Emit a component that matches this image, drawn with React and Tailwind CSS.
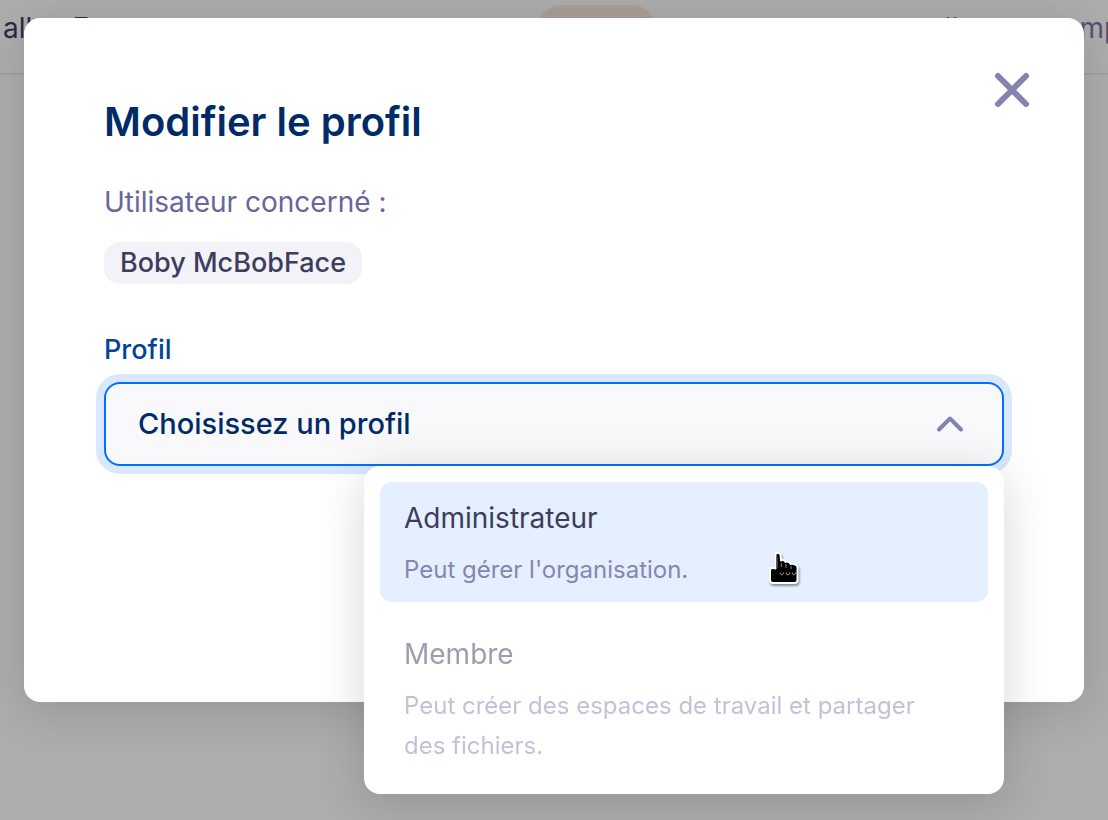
import { useState } from "react";

const PROFILES = [
  { id: "admin", name: "Administrateur", description: "Peut gérer l'organisation.", disabled: false },
  {
    id: "member",
    name: "Membre",
    description: "Peut créer des espaces de travail et partager des fichiers.",
    disabled: true,
  },
];

function HandPointer() {
  return (
    <svg
      aria-hidden="true"
      viewBox="0 0 32 34"
      className="pointer-events-none absolute top-[85px] right-[204px] h-[34px] w-8 drop-shadow-[1px_2px_1px_rgba(0,0,0,0.4)]"
    >
      <path
        d="M7.500 3.500C7.500 1.500 12 1.500 12.500 3.500L13 9.500C14 8.500 17 9 17.500 11C19 10 22 11 22.500 13C25 12.500 29 13.500 29.500 16V29C29.500 31 28.500 32 26.500 32H5C3 32 2 31 2 29V19C2 17.500 4 16.500 7.500 17.500Z"
        fill="#000"
        stroke="#fff"
        strokeWidth="2"
        strokeLinejoin="round"
      />
      <path d="M9 6V17" stroke="#555" strokeWidth="1.500" />
      <path d="M13.300 12V16M18 13V17M23 15V18" stroke="#888" strokeWidth="1" />
      <g fill="none" stroke="#b5b5b5" strokeWidth="1">
        <path d="M12.300 21.500C12 24.500 15.800 24.500 15.500 21.500" />
        <path d="M18.300 21.500C18 24.500 21.800 24.500 21.500 21.500" />
        <path d="M24.300 21.500C24 24.500 27.800 24.500 27.500 21.500" />
      </g>
    </svg>
  );
}

function MembersRow() {
  return (
    <div className="flex h-[75px] items-start border-b-2 border-[#eeeeee] pt-[5px] text-[28px] leading-[46px]">
      <div className="w-[538px] pl-[3px] text-[#3f3e68]">allan F</div>
      <div className="h-[46px] w-[117px] rounded-full bg-[#fdebdf]" />
      <div className="flex flex-1 justify-end overflow-hidden text-[#7b79ac]">
        <span className="w-[164px] whitespace-nowrap">Il y a un temps</span>
      </div>
    </div>
  );
}

function ProfileSelect() {
  const [open, setOpen] = useState(true);
  const [value, setValue] = useState("");

  const toggle = (event) => {
    event.preventDefault();
    setOpen(!open);
  };

  return (
    <div className="relative">
      <select
        id="profile"
        value={value}
        onMouseDown={toggle}
        onChange={(event) => setValue(event.target.value)}
        className="block h-[84px] w-full appearance-none rounded-2xl border-2 border-[#0070ff] bg-[#f9f9fc] px-8 text-[29px] font-medium text-[#002b66] ring-8 ring-[#d9e8ff] outline-none"
      >
        <option value="">Choisissez un profil</option>
        {PROFILES.map((profile) => (
          <option key={profile.id} value={profile.id} disabled={profile.disabled}>
            {profile.name}
          </option>
        ))}
      </select>
      <svg
        aria-hidden="true"
        viewBox="0 0 28 18"
        className="pointer-events-none absolute top-[33px] right-10 h-[18px] w-7"
      >
        <path
          d="M3 14.500L14 3.500L25 14.500"
          fill="none"
          stroke="#8583b0"
          strokeWidth="4"
          strokeLinecap="round"
          strokeLinejoin="round"
        />
      </svg>
      {open && (
        <div className="absolute top-full right-0 flex w-[640px] max-w-full flex-col gap-4 rounded-2xl bg-white p-4 shadow-[0_8px_48px_rgba(0,0,0,0.16)]">
          {PROFILES.map((profile) => (
            <button
              key={profile.id}
              type="button"
              disabled={profile.disabled}
              onClick={() => {
                setValue(profile.id);
                setOpen(false);
              }}
              className="rounded-xl pt-4 pr-12 pb-3 pl-6 text-left enabled:bg-[#e4f0ff] disabled:opacity-50"
            >
              <span className="block text-[28px] leading-10 text-[#3d3c5c]">{profile.name}</span>
              <span className="mt-3 block text-2xl leading-10 text-[#8785b2]">{profile.description}</span>
            </button>
          ))}
          <HandPointer />
        </div>
      )}
    </div>
  );
}

export default function App() {
  return (
    <div className="relative min-h-screen bg-white font-['Inter',sans-serif]">
      <MembersRow />
      <div className="absolute inset-0 bg-black/32 px-6 pt-[18px]">
        <section
          role="dialog"
          aria-labelledby="dialog-title"
          className="relative rounded-2xl bg-white px-20 pt-20 pb-[236px] shadow-[0_8px_48px_rgba(0,0,0,0.14)]"
        >
          <button type="button" aria-label="Fermer" className="absolute top-[54px] right-[54px]">
            <svg viewBox="0 0 36 36" className="size-9" aria-hidden="true">
              <path d="M4 4L32 32M32 4L4 32" stroke="#8583b0" strokeWidth="6" strokeLinecap="round" />
            </svg>
          </button>
          <h1 id="dialog-title" className="text-[40px] leading-[48px] font-semibold text-[#002b66]">
            Modifier le profil
          </h1>
          <p className="mt-9 text-[28px] leading-10 text-[#68669c]">Utilisateur concerné :</p>
          <p className="mt-5 w-fit rounded-2xl bg-[#f2f2f8] px-4 text-[27px] leading-[42px] font-medium text-[#3d3c5c]">
            Boby McBobFace
          </p>
          <label htmlFor="profile" className="mt-[46px] mb-3 block w-fit text-[27px] leading-10 font-medium text-[#00429a]">
            Profil
          </label>
          <ProfileSelect />
        </section>
      </div>
    </div>
  );
}
